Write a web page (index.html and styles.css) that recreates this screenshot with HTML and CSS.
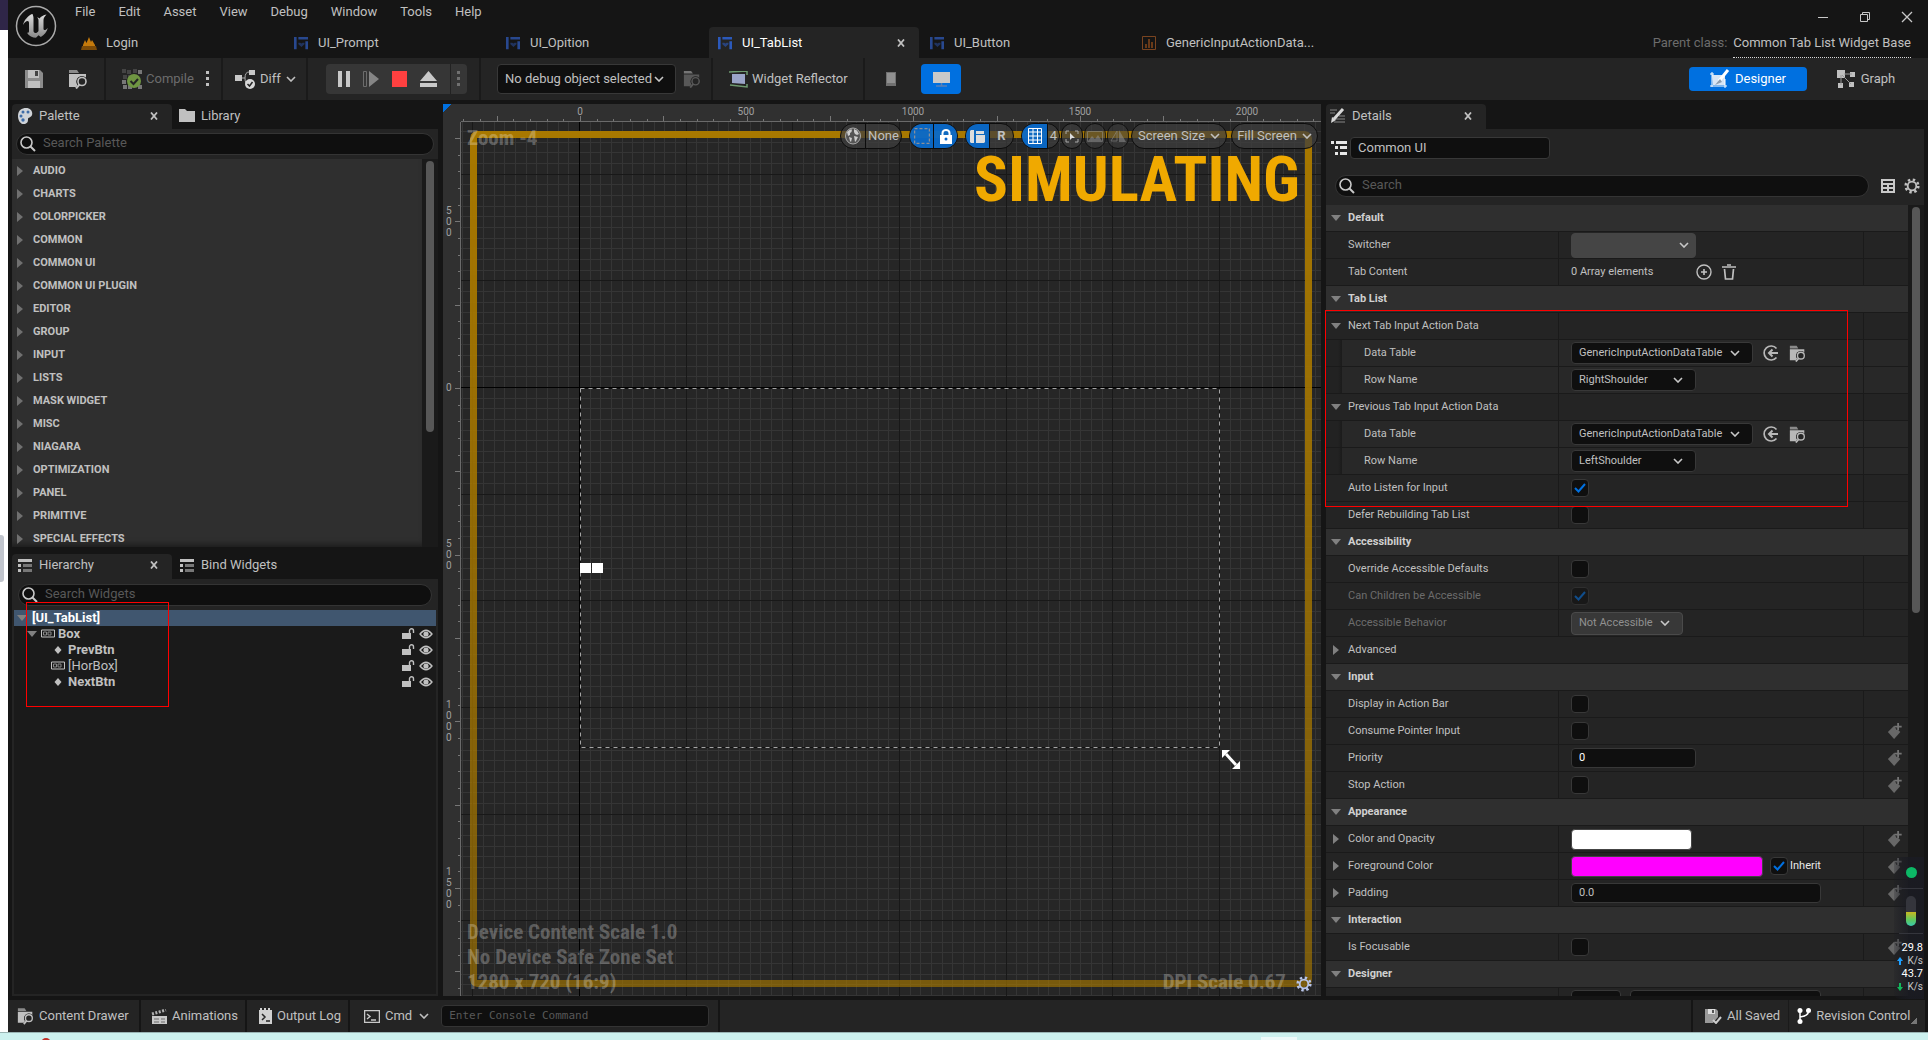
FILE: index.html
```html
<!DOCTYPE html>
<html lang="en">
<head>
<meta charset="utf-8">
<title>UI_TabList - Widget Designer</title>
<link rel="stylesheet" href="styles.css">
</head>
<body>
<svg class="defs" aria-hidden="true">
  <symbol id="browse" viewBox="0 0 20 20"><path fill="#8a8a8a" d="M1 1h8l2 3H1z"/><path fill="currentColor" d="M1 5h17v4.500a5 5 0 0 0-8.500 6.500L8 18H1z"/><circle cx="14" cy="12.500" r="5.500" fill="#242424"/><circle cx="14" cy="12.500" r="4" fill="none" stroke="currentColor" stroke-width="1.600"/><path d="M11.500 15.500L8 19.500" stroke="currentColor" stroke-width="2"/></symbol>
  <symbol id="widget" viewBox="0 0 16 16"><path fill="currentColor" d="M0 1h3v14H0zM5 1h11v3H5zM13 6h3v9h-3z"/><path fill="currentColor" opacity=".6" d="M8.500 12.500L5 9.300V7.600h2.200l1.300 1 1.300-1H12v1.700z"/></symbol>
  <symbol id="glass" viewBox="0 0 16 16"><circle cx="6.500" cy="6.500" r="5.500" fill="none" stroke="currentColor" stroke-width="1.600"/><path d="M10.500 10.500L15 15" stroke="currentColor" stroke-width="2"/></symbol>
  <symbol id="down" viewBox="0 0 10 6"><path d="M1 1l4 4 4-4" fill="none" stroke="currentColor" stroke-width="1.600"/></symbol>
  <symbol id="close" viewBox="0 0 8 8"><path d="M1 .5l6 7M7 .5l-6 7" stroke="currentColor" stroke-width="1.800"/></symbol>
  <symbol id="tree" viewBox="0 0 14 13"><path fill="currentColor" d="M0 0h14v3H0zM0 5h3v3H0zM0 10h3v3H0z"/><path fill="#777" d="M5 5h9v3H5zM5 10h9v3H5z"/></symbol>
  <symbol id="open" viewBox="0 0 10 8"><path fill="currentColor" d="M0 1h10L5 7z"/></symbol>
  <symbol id="shut" viewBox="0 0 8 10"><path fill="currentColor" d="M1 0l6 5-6 5z"/></symbol>
  <symbol id="unlock" viewBox="0 0 14 12"><path fill="currentColor" d="M1 5h9v6H1z"/><path d="M8.500 5V2.800a2 2 0 0 1 4 0V5" fill="none" stroke="currentColor" stroke-width="1.400"/></symbol>
  <symbol id="eye" viewBox="0 0 14 10"><path d="M1 5q6-7.500 12 0-6 7.500-12 0z" fill="none" stroke="currentColor" stroke-width="1.300"/><circle cx="7" cy="5" r="2.600" fill="currentColor"/></symbol>
  <symbol id="box" viewBox="0 0 14 8"><path d="M.5.5h13v7H.5z" fill="none" stroke="currentColor"/><path d="M2.500 2.500h3v3h-3zM7 2.500h3v3H7z" fill="none" stroke="#888"/></symbol>
  <symbol id="dia" viewBox="0 0 8 8"><path fill="currentColor" d="M4 0L7.500 4 4 8 .5 4z"/></symbol>
  <symbol id="key" viewBox="0 0 16 18"><path fill="#686868" d="M7 3l7 7-7 8-7-8z"/><path d="M11.500 0v8M8 4h7" stroke="#252525" stroke-width="4"/><path d="M11.500 0v8M7.500 4h8" stroke="#747474" stroke-width="2"/></symbol>
  <symbol id="use" viewBox="0 0 16 16"><path d="M13.500 3.500a7 7 0 1 0 0 9" fill="none" stroke="currentColor" stroke-width="1.700"/><path d="M15 8H6M9.500 4.500L6 8l3.500 3.500" fill="none" stroke="currentColor" stroke-width="2"/></symbol>
  <symbol id="gear" viewBox="0 0 16 16"><circle cx="8" cy="8" r="6.300" fill="none" stroke="currentColor" stroke-width="2.600" stroke-dasharray="2.400 2.550"/><circle cx="8" cy="8" r="4.300" fill="none" stroke="currentColor" stroke-width="1.800"/></symbol>
</svg>

<div class="desktop">
<div class="behind"><i class="behind-top"></i><i class="behind-thumb"></i></div>
<div class="app">

<header class="top">
  <svg class="logo" viewBox="0 0 42 42"><defs><linearGradient id="lg" x1="0" y1="0" x2="0" y2="1"><stop offset="0" stop-color="#ddd"/><stop offset="1" stop-color="#888"/></linearGradient></defs><circle cx="21" cy="21" r="19.500" fill="#111" stroke="#aaa" stroke-width="1.500"/><path fill="url(#lg)" d="M17 9c-4 2-8 6-9 11 2-3 3-4 4.500-4 1 0 1.500.8 1.500 2v8c0 1.500-.8 2-2 1.800 2 3.500 5.500 5 9 5l2.500-2.500 2.300 1.700c3.500-2 6-5 7-9-1.300 1.500-2.500 2.300-3.500 2-.8-.2-.8-1-.8-2V15c0-2 1.500-4 3-5.500-3 .5-5.500 2-7 4-.6-.8-1.500-1-2.500-1 1 .8 1.500 1.600 1.500 3v10.500c-1 1.500-2 2-3 2s-2-.8-2-2V13c0-1.500-.5-2.500-1-4z"/></svg>
  <div class="top-body">
    <div class="menubar">
      <nav class="menus"><button>File</button><button>Edit</button><button>Asset</button><button>View</button><button>Debug</button><button>Window</button><button>Tools</button><button>Help</button></nav>
      <div class="winbtns">
        <button aria-label="Minimize"><svg width="12" height="12" viewBox="0 0 12 12"><path d="M1 6.500h10" stroke="#c8c8c8"/></svg></button>
        <button aria-label="Restore"><svg width="12" height="12" viewBox="0 0 12 12"><path d="M1.500 3.500h7v7h-7zM3.500 3.500v-2h7v7h-2" fill="none" stroke="#c8c8c8"/></svg></button>
        <button aria-label="Close"><svg width="12" height="12" viewBox="0 0 12 12"><path d="M1 1l10 10M11 1L1 11" stroke="#c8c8c8" stroke-width="1.300"/></svg></button>
      </div>
    </div>
    <div class="docs">
      <button class="doc"><svg width="16" height="14" viewBox="0 0 16 14"><path fill="#c47a0c" d="M2 9l2-5 1.500 3L8 1l2 5 1-2 3 5v1H2z"/><path fill="#7c4b08" d="M1 10h14l1 4H0z"/></svg>Login</button>
      <button class="doc blue"><svg width="16" height="14"><use href="#widget"/></svg>UI_Prompt</button>
      <button class="doc blue"><svg width="16" height="14"><use href="#widget"/></svg>UI_Opition</button>
      <button class="doc blue active"><svg width="16" height="14"><use href="#widget"/></svg>UI_TabList<svg class="x" width="8" height="8"><use href="#close"/></svg></button>
      <button class="doc blue"><svg width="16" height="14"><use href="#widget"/></svg>UI_Button</button>
      <button class="doc"><svg width="16" height="14" viewBox="0 0 16 14"><path d="M1.500.5h13v13h-13z" fill="none" stroke="#7a4420"/><path stroke="#6a3a18" stroke-width="2" d="M5 12V8M8 12V3M11 12V6"/></svg>GenericInputActionData...</button>
      <p class="parent">Parent class: <a href="#">Common Tab List Widget Base</a></p>
    </div>
  </div>
</header>

<div class="toolbar">
  <div class="group g-file">
    <button aria-label="Save"><svg width="18" height="18" viewBox="0 0 18 18"><path fill="#8c8c8c" d="M0 0h15l3 3v15H0z"/><path fill="#c0c0c0" d="M3 0h11v8H3z"/><path fill="#444" d="M10 1h3v5h-3z"/><path fill="#c0c0c0" d="M3 11h12v7H3z"/></svg></button>
    <button aria-label="Browse"><svg width="20" height="20"><use href="#browse"/></svg></button>
  </div>
  <div class="group g-compile">
    <button class="off"><svg width="20" height="20" viewBox="0 0 20 20"><path fill="#444" d="M0 0h4v4H0zM5 1h4v4H5zM11 0h4v4h-4zM1 6h4v4H1zM6 6h4v4H6z"/><path fill="#777" d="M16 1h4v4h-4zM0 11h4v4H0zM1 16h4v4H1zM6 16h4v4H6zM16 16h4v4h-4z"/><circle cx="12" cy="12" r="7" fill="#6f9642"/><path d="M8.500 12l3 3 4.500-5" fill="none" stroke="#252525" stroke-width="2"/></svg>Compile</button>
    <button aria-label="Compile options"><svg width="4" height="16" viewBox="0 0 4 16"><path fill="#c0c0c0" d="M0 0h3v3H0zM0 6h3v3H0zM0 12h3v3H0z"/></svg></button>
  </div>
  <div class="group g-diff">
    <button><svg width="21" height="19" viewBox="0 0 21 19"><path fill="#c8c8c8" d="M0 5h7v6H0zM14 0h6v5h-6z"/><path d="M7 8h3M10 8q0-6 4-6M10 8q0 6 3 6" fill="none" stroke="#aaa"/><circle cx="15" cy="14" r="5" fill="#d8d8d8"/><path d="M12.500 14l2 2 3-4" fill="none" stroke="#252525" stroke-width="1.500"/></svg>Diff<svg width="10" height="6"><use href="#down"/></svg></button>
  </div>
  <div class="group g-play">
    <div class="play">
      <button aria-label="Pause"><svg width="12" height="16" viewBox="0 0 12 16"><path fill="#c8c8c8" d="M0 0h4v16H0zM8 0h4v16H8z"/></svg></button>
      <button aria-label="Step"><svg width="16" height="16" viewBox="0 0 16 16"><path fill="none" stroke="#6c6c6c" d="M.5.5h3v15h-3z"/><path fill="#858585" d="M6 0l10 8-10 8z"/></svg></button>
      <button aria-label="Stop"><svg width="15" height="16" viewBox="0 0 15 16"><path fill="#ff4040" d="M0 0h15v16H0z"/></svg></button>
      <button aria-label="Eject"><svg width="17" height="16" viewBox="0 0 17 16"><path fill="#c8c8c8" d="M8.500 0L17 10H0zM0 12h17v4H0z"/></svg></button>
      <button class="more" aria-label="Play options"><svg width="4" height="16" viewBox="0 0 4 16"><path fill="#707070" d="M0 0h3v3H0zM0 6h3v3H0zM0 12h3v3H0z"/></svg></button>
    </div>
  </div>
  <div class="group g-debug">
    <select class="dark debug" aria-label="Debug object"><option>No debug object selected</option></select>
    <button class="dim" aria-label="Browse debug object"><svg width="18" height="18"><use href="#browse"/></svg></button>
  </div>
  <div class="group g-reflect">
    <button><svg width="19" height="17" viewBox="0 0 19 17"><path fill="#9aa4c8" d="M3 3h13v10l-13-1z"/><path d="M0 1l18-1v4M1 14l17 2v-3" fill="none" stroke="#6e9a70" stroke-width="1.500"/></svg>Widget Reflector</button>
  </div>
  <div class="group g-view">
    <button aria-label="Mobile"><svg width="10" height="14" viewBox="0 0 10 14"><path fill="#707070" d="M0 0h10v14H0z"/><path fill="#909090" d="M1 1h8v10H1z"/></svg></button>
    <button class="desk" aria-label="Desktop"><svg width="17" height="15" viewBox="0 0 17 15"><path fill="#c9c9c9" d="M0 0h17v11H0z"/><path d="M8.500 11v3M3 14h11" stroke="#5a7fb5" stroke-width="1.500"/></svg></button>
  </div>
  <div class="modes">
    <button class="mode on"><svg width="20" height="20" viewBox="0 0 20 20"><path d="M2 6h13v10H3z" fill="#d8e6f5"/><path d="M0 5h4M2 3v15M0 17h17M15 10v9" stroke="#fff"/><path d="M18 1L9 12" stroke="#fff" stroke-width="3"/><path d="M10 10l-5 6 7-3z" fill="#8d9dae"/></svg>Designer</button>
    <button class="mode"><svg width="19" height="18" viewBox="0 0 19 18"><path fill="#c0c0c0" d="M0 0h8v8H0zM13 2h5v5h-5zM1 13h5v5H1zM12 12h5v5h-5z"/><path d="M4 5v10M7 4h8M5 5l9 9" stroke="#999"/></svg>Graph</button>
  </div>
</div>

<main class="work">
  <div class="side">
    <section class="panel">
      <div class="tabs">
        <button class="tab active"><svg width="16" height="16" viewBox="0 0 16 16"><path fill="#cfd3d8" d="M9 0c5 0 7 4 6 7s-4 2-4 4 0 4-3 5-7-2-7-8 4-8 8-8z"/><g fill="#3f6da8"><circle cx="6" cy="4" r="1.500"/><circle cx="11" cy="4" r="1.500"/><circle cx="4" cy="8" r="1.500"/><circle cx="6" cy="12" r="1.700"/></g></svg>Palette<svg class="x" width="8" height="8"><use href="#close"/></svg></button>
        <button class="tab"><svg width="16" height="13" viewBox="0 0 16 13"><path fill="#c0c0c0" d="M0 0h6l2 2h8v11H0z"/></svg>Library</button>
      </div>
      <div class="panel-body">
        <div class="search"><svg width="16" height="16"><use href="#glass"/></svg><input type="text" aria-label="Search Palette" placeholder="Search Palette"></div>
        <div class="scroller">
          <ul class="cats">
            <li><svg width="8" height="10"><use href="#shut"/></svg>AUDIO</li>
            <li><svg width="8" height="10"><use href="#shut"/></svg>CHARTS</li>
            <li><svg width="8" height="10"><use href="#shut"/></svg>COLORPICKER</li>
            <li><svg width="8" height="10"><use href="#shut"/></svg>COMMON</li>
            <li><svg width="8" height="10"><use href="#shut"/></svg>COMMON UI</li>
            <li><svg width="8" height="10"><use href="#shut"/></svg>COMMON UI PLUGIN</li>
            <li><svg width="8" height="10"><use href="#shut"/></svg>EDITOR</li>
            <li><svg width="8" height="10"><use href="#shut"/></svg>GROUP</li>
            <li><svg width="8" height="10"><use href="#shut"/></svg>INPUT</li>
            <li><svg width="8" height="10"><use href="#shut"/></svg>LISTS</li>
            <li><svg width="8" height="10"><use href="#shut"/></svg>MASK WIDGET</li>
            <li><svg width="8" height="10"><use href="#shut"/></svg>MISC</li>
            <li><svg width="8" height="10"><use href="#shut"/></svg>NIAGARA</li>
            <li><svg width="8" height="10"><use href="#shut"/></svg>OPTIMIZATION</li>
            <li><svg width="8" height="10"><use href="#shut"/></svg>PANEL</li>
            <li><svg width="8" height="10"><use href="#shut"/></svg>PRIMITIVE</li>
            <li><svg width="8" height="10"><use href="#shut"/></svg>SPECIAL EFFECTS</li>
          </ul>
          <div class="bar"><i class="thumb thumb-palette"></i></div>
        </div>
      </div>
    </section>
    <section class="panel">
      <div class="tabs">
        <button class="tab active"><svg width="16" height="13"><use href="#tree"/></svg>Hierarchy<svg class="x" width="8" height="8"><use href="#close"/></svg></button>
        <button class="tab"><svg width="16" height="13"><use href="#tree"/></svg>Bind Widgets</button>
      </div>
      <div class="panel-body hier">
        <div class="search"><svg width="16" height="16"><use href="#glass"/></svg><input type="text" aria-label="Search Widgets" placeholder="Search Widgets"></div>
        <ul class="treelist">
          <li class="sel"><svg class="arrow" width="10" height="8"><use href="#open"/></svg><b>[UI_TabList]</b></li>
          <li class="d1"><svg class="arrow" width="10" height="8"><use href="#open"/></svg><svg width="14" height="9"><use href="#box"/></svg><b>Box</b><span class="acts"><svg width="14" height="12"><use href="#unlock"/></svg><svg width="14" height="10"><use href="#eye"/></svg></span></li>
          <li class="d2"><svg width="14" height="8"><use href="#dia"/></svg><b>PrevBtn</b><span class="acts"><svg width="14" height="12"><use href="#unlock"/></svg><svg width="14" height="10"><use href="#eye"/></svg></span></li>
          <li class="d2"><svg width="14" height="9"><use href="#box"/></svg><span>[HorBox]</span><span class="acts"><svg width="14" height="12"><use href="#unlock"/></svg><svg width="14" height="10"><use href="#eye"/></svg></span></li>
          <li class="d2"><svg width="14" height="8"><use href="#dia"/></svg><b>NextBtn</b><span class="acts"><svg width="14" height="12"><use href="#unlock"/></svg><svg width="14" height="10"><use href="#eye"/></svg></span></li>
        </ul>
        <i class="mark mark-tree"></i>
      </div>
    </section>
  </div>

  <section class="viewport">
    <div class="corner"></div>
    <div class="ruler-x"><span style="left:119px">0</span><span style="left:285px">500</span><span style="left:452px">1000</span><span style="left:619px">1500</span><span style="left:786px">2000</span></div>
    <div class="ruler-y"><span style="top:99px">5<br>0<br>0</span><span style="top:265px">0</span><span style="top:432px">5<br>0<br>0</span><span style="top:599px">1<br>0<br>0<br>0</span><span style="top:766px">1<br>5<br>0<br>0</span></div>
    <div class="canvas">
      <i class="axis-x"></i><i class="axis-y"></i>
      <i class="sim-border"></i>
      <svg class="bounds" width="640" height="360"><rect x=".5" y=".5" width="639" height="359" fill="none" stroke="#111"/><rect x=".5" y=".5" width="639" height="359" fill="none" stroke="#a4a4a4" stroke-dasharray="4 4"/></svg>
      <i class="handle"></i><i class="handle second"></i>
      <svg class="resize" width="18" height="19" viewBox="0 0 18 19"><path d="M4 4l10 11" stroke="#fff" stroke-width="3"/><path fill="#fff" d="M0 0h8L0 8zM18 19h-8l8-8z"/></svg>
      <p class="hint zoom">Zoom -4</p>
      <p class="hint info">Device Content Scale 1.0<br>No Device Safe Zone Set<br>1280 x 720 (16:9)</p>
      <p class="hint dpi">DPI Scale 0.67</p>
      <svg class="dpi-gear" width="16" height="16"><use href="#gear"/></svg>
      <p class="sim">SIMULATING</p>
      <div class="pills">
        <div class="pill p-none"><button aria-label="Localization"><svg width="16" height="18" viewBox="0 0 16 18"><ellipse cx="8" cy="9" rx="7.500" ry="8" fill="#555" stroke="#aaa"/><path fill="#ccc" d="M2 5l3-2.500h2L6.500 5 5 6v2L3 9zM4 10l3 1-1 4-1-1zM9 2l3 1.500L14 7l-2 1-2-1-1-2zM9 9l4 1-2 4-1 1z"/></svg></button><button>None</button></div>
        <div class="pill p-two"><button class="on" aria-label="Outline"><svg width="16" height="16" viewBox="0 0 16 16"><path d="M.5.5h15v15H.5z" fill="none" stroke="#8a8f98" stroke-width="1.500" stroke-dasharray="3 2"/></svg></button><button class="on" aria-label="Respect locks"><svg width="12" height="15" viewBox="0 0 12 15"><path fill="#fff" d="M0 6h12v9H0z"/><path d="M2.500 6V4a3.500 3 0 0 1 7 0v2" fill="none" stroke="#fff" stroke-width="2"/><circle cx="6" cy="10" r="1.500" fill="#0a66c8"/></svg></button></div>
        <div class="pill p-two"><button class="on" aria-label="Flow"><svg width="15" height="13" viewBox="0 0 15 13"><path fill="#ddd" d="M0 1l1-1h3v13H1l-1-1zM6 1h8v3H6zM6 5h9v7l-1 1H6z"/></svg></button><button><b>R</b></button></div>
        <div class="pill p-grid"><button class="on" aria-label="Grid snap"><svg width="14" height="16" viewBox="0 0 14 16"><path d="M.5.5h13v15H.5zM5 0v16M9.500 0v16M0 4h14M0 8h14M0 12h14" fill="none" stroke="#fff"/></svg></button><button>4</button></div>
        <div class="pill round"><button aria-label="Zoom to fit"><svg width="14" height="13" viewBox="0 0 14 13"><path d="M1 4V1h3M10 1h3v3M13 9v3h-3M4 12H1V9" fill="none" stroke="#aaa"/><path fill="#ddd" d="M5 3l5 5H7l-2 2z"/></svg></button></div>
        <div class="pill round off"><button aria-label="Preview background"><svg width="16" height="11" viewBox="0 0 16 11"><path d="M.5.5h15v10H.5z" fill="none" stroke="#777"/><path fill="#777" d="M1 10l4-5 3 3 3-4 4 6z"/></svg></button></div>
        <div class="pill round off"><button aria-label="Flip"><svg width="16" height="12" viewBox="0 0 16 12"><path fill="none" stroke="#777" d="M7 1v10H1z"/><path fill="#777" d="M9 0v12h7z"/></svg></button></div>
        <div class="pill wide"><button>Screen Size<svg width="10" height="6"><use href="#down"/></svg></button></div>
        <div class="pill fill"><button>Fill Screen<svg width="10" height="6"><use href="#down"/></svg></button></div>
      </div>
    </div>
  </section>

  <section class="panel details">
    <div class="tabs"><button class="tab active"><svg width="16" height="16" viewBox="0 0 16 16"><path d="M0 2h7M0 5h5M9 8h6M6 11h9M4 14h11" stroke="#666" stroke-width="1.500"/><path d="M13 1L4 11" stroke="#d8d8d8" stroke-width="3"/><path fill="#d8d8d8" d="M2 9l4 3-5 3z"/></svg>Details<svg class="x" width="8" height="8"><use href="#close"/></svg></button></div>
    <div class="panel-body">
      <div class="namebar"><svg width="16" height="14" viewBox="0 0 16 14"><path fill="#e8e8e8" d="M0 0h3v3H0zM5 0h11v3H5zM4 5h3v3H4zM9 5h7v3H9zM4 11h3v3H4zM9 11h7v3H9z"/></svg><input class="field" type="text" aria-label="Widget name" value="Common UI"></div>
      <div class="searchbar"><div class="search"><svg width="16" height="16"><use href="#glass"/></svg><input type="text" aria-label="Search details" placeholder="Search"></div>
        <button aria-label="Property matrix"><svg width="14" height="14" viewBox="0 0 14 14"><path fill="#c8c8c8" fill-rule="evenodd" d="M0 0h14v14H0zM2 2v2h10V2zM2 6v2h4V6zM8 6v2h4V6zM2 10v2h4v-2zM8 10v2h4v-2z"/></svg></button><button aria-label="Settings"><svg width="16" height="16"><use href="#gear"/></svg></button></div>
      <div class="props">
        <div class="rows">
          <div class="row head"><svg width="10" height="8"><use href="#open"/></svg>Default</div>
          <div class="row"><label class="name" for="sw">Switcher</label><div class="val"><select id="sw" class="gray"><option></option></select></div><div class="end"></div></div>
          <div class="row"><div class="name">Tab Content</div><div class="val"><span class="count">0 Array elements</span><button aria-label="Add element"><svg width="16" height="16" viewBox="0 0 16 16"><circle cx="8" cy="8" r="7" fill="none" stroke="#c0c0c0" stroke-width="1.400"/><path d="M8 5v6M5 8h6" stroke="#c0c0c0" stroke-width="1.600"/></svg></button><button aria-label="Remove all"><svg width="14" height="16" viewBox="0 0 14 16"><path d="M0 3h14M5 1h4M2.500 5l1 10h7l1-10" fill="none" stroke="#c0c0c0" stroke-width="1.700"/></svg></button></div><div class="end"></div></div>
          <div class="row head"><svg width="10" height="8"><use href="#open"/></svg>Tab List</div>
          <div class="row"><div class="name has"><svg width="10" height="8"><use href="#open"/></svg>Next Tab Input Action Data</div><div class="val"></div><div class="end"></div></div>
          <div class="row sub"><label class="name" for="dt1">Data Table</label><div class="val"><select id="dt1" class="dark table"><option>GenericInputActionDataTable</option></select><button aria-label="Use selected"><svg width="16" height="16"><use href="#use"/></svg></button><button aria-label="Browse to asset"><svg width="17" height="17"><use href="#browse"/></svg></button></div><div class="end"></div></div>
          <div class="row sub"><label class="name" for="rn1">Row Name</label><div class="val"><select id="rn1" class="dark name-sel"><option>RightShoulder</option></select></div><div class="end"></div></div>
          <div class="row"><div class="name has"><svg width="10" height="8"><use href="#open"/></svg>Previous Tab Input Action Data</div><div class="val"></div><div class="end"></div></div>
          <div class="row sub"><label class="name" for="dt2">Data Table</label><div class="val"><select id="dt2" class="dark table"><option>GenericInputActionDataTable</option></select><button aria-label="Use selected"><svg width="16" height="16"><use href="#use"/></svg></button><button aria-label="Browse to asset"><svg width="17" height="17"><use href="#browse"/></svg></button></div><div class="end"></div></div>
          <div class="row sub"><label class="name" for="rn2">Row Name</label><div class="val"><select id="rn2" class="dark name-sel"><option>LeftShoulder</option></select></div><div class="end"></div></div>
          <div class="row"><label class="name" for="c1">Auto Listen for Input</label><div class="val"><input id="c1" type="checkbox" checked></div><div class="end"></div></div>
          <div class="row"><label class="name" for="c2">Defer Rebuilding Tab List</label><div class="val"><input id="c2" type="checkbox"></div><div class="end"></div></div>
          <div class="row head"><svg width="10" height="8"><use href="#open"/></svg>Accessibility</div>
          <div class="row"><label class="name" for="c3">Override Accessible Defaults</label><div class="val"><input id="c3" type="checkbox"></div><div class="end"></div></div>
          <div class="row"><label class="name muted" for="c4">Can Children be Accessible</label><div class="val"><input id="c4" type="checkbox" checked disabled></div><div class="end"></div></div>
          <div class="row"><label class="name muted" for="ab">Accessible Behavior</label><div class="val"><select id="ab" class="gray access" disabled><option>Not Accessible</option></select></div><div class="end"></div></div>
          <div class="row"><div class="name has adv"><svg width="10" height="10"><use href="#shut"/></svg>Advanced</div></div>
          <div class="row head"><svg width="10" height="8"><use href="#open"/></svg>Input</div>
          <div class="row"><label class="name" for="c5">Display in Action Bar</label><div class="val"><input id="c5" type="checkbox"></div><div class="end"></div></div>
          <div class="row"><label class="name" for="c6">Consume Pointer Input</label><div class="val"><input id="c6" type="checkbox"></div><div class="end"><svg width="16" height="16"><use href="#key"/></svg></div></div>
          <div class="row"><label class="name" for="pr">Priority</label><div class="val"><input id="pr" class="field num" type="text" value="0"></div><div class="end"><svg width="16" height="16"><use href="#key"/></svg></div></div>
          <div class="row"><label class="name" for="c7">Stop Action</label><div class="val"><input id="c7" type="checkbox"></div><div class="end"><svg width="16" height="16"><use href="#key"/></svg></div></div>
          <div class="row head"><svg width="10" height="8"><use href="#open"/></svg>Appearance</div>
          <div class="row"><div class="name has"><svg width="10" height="10"><use href="#shut"/></svg>Color and Opacity</div><div class="val"><button class="swatch white" aria-label="Color and Opacity"></button></div><div class="end"><svg width="16" height="16"><use href="#key"/></svg></div></div>
          <div class="row"><div class="name has"><svg width="10" height="10"><use href="#shut"/></svg>Foreground Color</div><div class="val"><button class="swatch pink" aria-label="Foreground Color"></button><input id="c8" type="checkbox" checked><label class="inherit" for="c8">Inherit</label></div><div class="end"><svg width="16" height="16"><use href="#key"/></svg></div></div>
          <div class="row"><label class="name has" for="pd"><svg width="10" height="10"><use href="#shut"/></svg>Padding</label><div class="val"><input id="pd" class="field pad" type="text" value="0.0"></div><div class="end"><svg width="16" height="16"><use href="#key"/></svg></div></div>
          <div class="row head"><svg width="10" height="8"><use href="#open"/></svg>Interaction</div>
          <div class="row"><label class="name" for="c9">Is Focusable</label><div class="val"><input id="c9" type="checkbox"></div><div class="end"><svg width="16" height="16"><use href="#key"/></svg></div></div>
          <div class="row head"><svg width="10" height="8"><use href="#open"/></svg>Designer</div>
          <div class="row"><div class="name"></div><div class="val"><input class="field f-a" type="text" aria-label="Designer size"><input class="field f-b" type="text" aria-label="Designer value"></div><div class="end"></div></div>
        </div>
        <div class="bar"><i class="thumb thumb-props"></i></div>
      </div>
      <i class="mark mark-props"></i>
    </div>
    <aside class="meter">
      <i class="dot"></i><i class="rule"></i><i class="level"></i><i class="rule"></i>
      <p>29.8</p><p class="rate"><svg width="6" height="8" viewBox="0 0 6 8"><path fill="#1e9fff" d="M3 0l3 4H4v4H2V4H0z"/></svg>K/s</p>
      <p>43.7</p><p class="rate"><svg width="6" height="8" viewBox="0 0 6 8"><path fill="#12b85c" d="M3 8l3-4H4V0H2v4H0z"/></svg>K/s</p>
    </aside>
  </section>
</main>

<footer class="status">
  <button class="st s1"><svg width="17" height="20"><use href="#browse"/></svg>Content Drawer</button>
  <button class="st s2"><svg width="16" height="15" viewBox="0 0 16 15"><path fill="#c8c8c8" d="M1 7h15v8H1z"/><path fill="#999" d="M3 9h5v2H3zM10 9h4v2h-4zM3 12h5v2H3zM10 12h4v2h-4z"/><path d="M1 5l14-4" stroke="#b0b0b0" stroke-width="3" stroke-dasharray="2 1.500"/></svg>Animations</button>
  <button class="st s3"><svg width="13" height="16" viewBox="0 0 13 16"><path fill="#d0d0d0" d="M0 2h1V0h2v2h2V0h2v2h2V0h2v2h2v14H0z"/><path d="M3 6l3 3-3 3M7 13h4" fill="none" stroke="#252525" stroke-width="1.500"/></svg>Output Log</button>
  <div class="cmd"><button class="st"><svg width="16" height="13" viewBox="0 0 16 13"><path d="M.5.5h15v12H.5z" fill="none" stroke="#c8c8c8" stroke-width="1.500"/><path d="M3 4l3 2.500L3 9M7 10h5" fill="none" stroke="#c8c8c8" stroke-width="1.400"/></svg>Cmd<svg width="10" height="6"><use href="#down"/></svg></button><input class="console" type="text" aria-label="Console command" placeholder="Enter Console Command"></div>
  <div class="right">
    <button class="st"><svg width="17" height="15" viewBox="0 0 17 15"><path fill="#999" d="M0 0h11l2 2v6l-5 6H0z"/><path fill="#ddd" d="M3 0h7v5H3z"/><path fill="#555" d="M7 1h2v3H7z"/><path d="M8 11l3 3 5-6" fill="none" stroke="#ccc" stroke-width="2"/></svg>All Saved</button>
    <button class="st rev"><svg width="14" height="16" viewBox="0 0 14 16"><circle cx="3" cy="2.500" r="2.500" fill="#fff"/><circle cx="3" cy="13.500" r="2.500" fill="#fff"/><circle cx="11.500" cy="2.500" r="2.500" fill="#fff"/><path d="M3 2v12M11.500 3q0 5-8.500 6" fill="none" stroke="#fff" stroke-width="1.500"/></svg>Revision Control<i class="grip"></i></button>
  </div>
</footer>
</div>
<div class="taskbar"><i class="blob"></i><i class="pale"></i></div>
</div>
</body>
</html>
```
FILE: styles.css
```css
* { box-sizing: border-box; }
body { margin: 0; background: #fff; font: 13px/16px Roboto, "Noto Sans", sans-serif; color: #c0c0c0; }
p, ul { margin: 0; padding: 0; list-style: none; }
i { display: block; font-style: normal; }
svg { flex: none; display: block; }
button, input, select { font: inherit; color: inherit; margin: 0; }
button { background: none; border: 0; padding: 0; display: flex; align-items: center; white-space: nowrap; }
.defs { position: absolute; width: 0; height: 0; }

.desktop { height: 100vh; display: grid; grid-template: minmax(0, 1fr) 8px / 8px minmax(0, 1fr); overflow: hidden; }
.behind { background: #fff; display: flex; flex-direction: column; }
.behind-top { height: 30px; background: #2f2648; }
.behind-thumb { margin-top: 505px; height: 47px; width: 4px; background: #c0c4cc; border-radius: 0 3px 3px 0; }
.taskbar { grid-column: 1 / 3; background: #cdf1ef; border-top: 1px solid #9ab4b4; display: flex; }
.blob { width: 10px; height: 6px; margin: 5px 0 0 41px; border-radius: 5px 5px 0 0; background: #c03028; }
.pale { width: 36px; height: 3px; margin: 4px 0 0 1210px; background: #eefafa; }
.app { background: #151515; display: flex; flex-direction: column; min-height: 0; }

/* Title bar */
.top { display: flex; height: 58px; flex: none; }
.logo { width: 42px; height: 42px; margin: 5px 0 0 7px; }
.top-body { flex: 1; min-width: 0; display: flex; flex-direction: column; justify-content: space-between; padding-left: 18px; }
.menubar { display: flex; justify-content: space-between; height: 27px; }
.menus { display: flex; gap: 23px; padding-bottom: 4px; }
.winbtns { display: flex; gap: 30px; padding: 7px 15px 0 0; }
.docs { display: flex; height: 31px; padding-right: 17px; margin-left: -2px; }
.doc { flex: 0 0 210px; margin-right: 2px; padding: 0 14px 0 8px; gap: 9px; border-radius: 4px 4px 0 0; }
.blue > svg:first-child { color: #28488f; }
.doc.active { background: #242424; color: #fff; }
.doc.active > svg:first-child { color: #2b59bb; }
.x { margin-left: auto; color: #c0c0c0; }
.parent { margin: 8px 0 0 auto; color: #6c6c6c; display: flex; gap: 6px; white-space: nowrap; }
.parent a { color: #c0c0c0; text-decoration: none; border-bottom: 1px dotted #d8d8d8; }

/* Toolbar */
.toolbar { flex: none; height: 42px; background: #242424; display: flex; margin-bottom: 4px; }
.group { display: flex; align-items: center; border-right: 2px solid #1a1a1a; }
.g-file { width: 98px; padding-left: 17px; gap: 25px; }
.g-compile { width: 117px; padding-left: 16px; justify-content: space-between; padding-right: 11px; }
.g-compile button, .g-diff button, .g-reflect button { gap: 4px; }
.off { color: #6c6c6c; }
.g-diff { width: 85px; padding-left: 12px; }
.g-diff button svg:last-child { margin-left: 1px; }
.g-play { width: 173px; padding-left: 18px; }
.play { display: flex; width: 141px; height: 30px; border-radius: 4px; background: #363636; padding-left: 12px; gap: 13px; }
.more { width: 23px; border-left: 1px solid #222; justify-content: center; margin-left: auto; }
.g-debug { width: 232px; padding-left: 16px; gap: 7px; }
.dim { color: #666; opacity: .8; }
.g-reflect { width: 152px; padding-left: 16px; }
.g-view { border: 0; padding-left: 21px; gap: 25px; }
.desk { width: 40px; height: 30px; border-radius: 4px; background: #0070e0; justify-content: center; }
.modes { margin-left: auto; display: flex; align-items: center; padding-right: 3px; }
.mode { width: 118px; height: 24px; border-radius: 4px; justify-content: center; gap: 5px; }
.on.mode { background: #0070e0; color: #fff; }

select { appearance: none; border-radius: 4px; padding: 0 22px 0 7px; border: 1px solid #383838; background: #0f0f0f url("data:image/svg+xml,%3Csvg xmlns='http://www.w3.org/2000/svg' width='10' height='6'%3E%3Cpath d='M1 1l4 4 4-4' fill='none' stroke='%23c8c8c8' stroke-width='1.600'/%3E%3C/svg%3E") no-repeat right 12px center; height: 22px; }
select.debug { width: 179px; height: 30px; background-position: right 11px center; }
select.gray { width: 125px; height: 25px; background-color: #454545; border-color: #454545; background-position: right 6px center; }
select.table { width: 182px; }
select.name-sel { width: 125px; }
select.access { width: 112px; height: 23px; background-color: #383838; border-color: #4a4a4a; color: #909090; opacity: 1; background-position: right 12px center; }

/* Work area */
.work { flex: 1; min-height: 0; display: grid; grid-template: minmax(0, 1fr) / 426px minmax(0, 1fr) 598px; gap: 5px; padding: 0 4px; }
.side { display: grid; grid-template-rows: minmax(0, 1fr) minmax(0, 1fr); gap: 7px; }
.panel { display: flex; flex-direction: column; min-height: 0; }
.tabs { display: flex; flex: none; height: 25px; }
.tab { width: 160px; padding: 0 14px 2px 5px; gap: 6px; border-radius: 4px 4px 0 0; }
.tab + .tab { padding-left: 7px; }
.tab.active { background: #242424; }
.panel-body { flex: 1; min-height: 0; background: #242424; display: flex; flex-direction: column; position: relative; }
.search { display: flex; align-items: center; gap: 7px; height: 22px; flex: none; margin: 4px; padding: 0 6px 0 3px; background: #0f0f0f; border: 1px solid #343434; border-radius: 11px; color: #c8c8c8; }
.search input { flex: 1; min-width: 0; background: none; border: 0; outline: 0; padding: 0 0 2px; }
::placeholder { color: #585858; opacity: 1; }
.scroller, .props { flex: 1; min-height: 0; display: flex; overflow: hidden; }
.cats { flex: 1; background: #2f2f2f; font-weight: 700; font-size: 11px; overflow: hidden; box-shadow: inset 0 -6px 6px -4px #1a1a1a; }
.cats li { height: 23px; display: flex; align-items: center; gap: 9px; padding-left: 4px; }
.cats svg { color: #707070; }
.bar { width: 16px; background: #1a1a1a; padding: 2px 4px; }
.thumb { width: 8px; border-radius: 4px; background: #575757; }
.thumb-palette { height: 271px; }
.thumb-props { height: 406px; }
.hier { padding: 1px 2px 2px; }
.treelist { flex: 1; background: #1a1a1a; }
.treelist li { height: 16px; display: flex; align-items: center; gap: 3px; padding: 0 3px; }
.arrow { color: #808080; margin-right: 1px; }
.sel { background: #40566f; color: #fff; }
.treelist .sel { gap: 4px; }
.treelist .d1 { padding-left: 13px; }
.treelist .d2 { padding-left: 37px; }
.acts { margin-left: auto; display: flex; align-items: center; gap: 4px; }
.mark { position: absolute; border: 1px solid #f00; pointer-events: none; }
.mark-tree { left: 14px; top: 23px; width: 143px; height: 105px; }
.mark-props { left: -1px; top: 181px; width: 523px; height: 197px; }

/* Designer viewport */
.viewport { display: grid; grid-template: 18px minmax(0, 1fr) / 18px minmax(0, 1fr); background: #303030; overflow: hidden; }
.corner { background: linear-gradient(135deg, #0070e0 6px, transparent 6px); }
.ruler-x, .ruler-y { position: relative; font-size: 10px; line-height: 11px; color: #a0a0a0; }
.ruler-x { border-bottom: 1px solid #6a6a6a; }
.ruler-y { border-right: 1px solid #6a6a6a; }
.ruler-x span { position: absolute; top: 2px; transform: translateX(-50%); }
.ruler-y span { position: absolute; left: 3px; transform: translateY(-50%); }
.ruler-x::after { content: ""; position: absolute; inset: auto 0 0 0; height: 5px;
  background: linear-gradient(to right, #777 0 1px, transparent 1px 83px, #777 83px 84px, transparent 84px 167px, #777 167px 168px, transparent 168px) 119px 0 / 250px 5px repeat-x,
  linear-gradient(to right, #777 0 1px, transparent 1px 17px, #777 17px 18px, transparent 18px 33px, #777 33px 34px, transparent 34px) 19px 3px / 50px 2px repeat-x; }
.ruler-y::after { content: ""; position: absolute; inset: 0 0 0 auto; width: 5px;
  background: linear-gradient(to bottom, #777 0 1px, transparent 1px 83px, #777 83px 84px, transparent 84px 167px, #777 167px 168px, transparent 168px) 0 266px / 5px 250px repeat-y,
  linear-gradient(to bottom, #777 0 1px, transparent 1px 17px, #777 17px 18px, transparent 18px 33px, #777 33px 34px, transparent 34px) 3px 16px / 2px 50px repeat-y; }
.canvas { position: relative; overflow: hidden; background-color: #262626;
  background-image:
    linear-gradient(to right, #181818 0 1px, transparent 1px 107px, #181818 107px 108px, transparent 108px 213px, #181818 213px 214px, transparent 214px),
    linear-gradient(to bottom, #181818 0 1px, transparent 1px 107px, #181818 107px 108px, transparent 108px 213px, #181818 213px 214px, transparent 214px),
    linear-gradient(to right, #353535 0 1px, transparent 1px 11px, #353535 11px 12px, transparent 12px 21px, #353535 21px 22px, transparent 22px),
    linear-gradient(to bottom, #353535 0 1px, transparent 1px 11px, #353535 11px 12px, transparent 12px 21px, #353535 21px 22px, transparent 22px);
  background-size: 320px 320px, 320px 320px, 32px 32px, 32px 32px;
  background-position: 118px 265px; }
.axis-x { position: absolute; left: 0; right: 0; top: 265px; height: 1px; background: #000; }
.axis-y { position: absolute; top: 0; bottom: 0; left: 118px; width: 1px; background: #000; }
.sim-border { position: absolute; inset: 9px; border: 7px solid #a87800; border-radius: 7px; -webkit-mask-image: linear-gradient(#000, rgba(0, 0, 0, .64)); mask-image: linear-gradient(#000, rgba(0, 0, 0, .64)); }
.bounds { position: absolute; left: 119px; top: 266px; }
.handle { position: absolute; left: 119px; top: 441px; width: 11px; height: 10px; background: #fff; }
.handle.second { left: 131px; }
.resize { position: absolute; left: 761px; top: 628px; }
.hint { position: absolute; font: 700 21px/25px "Roboto Condensed", "Liberation Sans Narrow", Roboto, sans-serif; color: rgba(255, 255, 255, .27); white-space: nowrap; }
.zoom { left: 6px; top: 4px; }
.info { left: 6px; bottom: 1px; }
.dpi { right: 35px; bottom: 1px; }
.dpi-gear { position: absolute; right: 9px; bottom: 4px; color: #b8c4e8; }
.sim { position: absolute; right: 21px; top: 20px; font: 700 63px/75px "Roboto Condensed", "Liberation Sans Narrow", Roboto, sans-serif; color: #f0a900; }
.pills { position: absolute; right: 3px; top: 1px; display: flex; }
.pill { display: flex; height: 26px; border: 1px solid #0c0c0c; border-radius: 13px; background: rgba(62, 62, 62, .72); overflow: hidden; }
.pill button { flex: 1; justify-content: center; gap: 5px; }
.pill button + button { border-left: 1px solid #0c0c0c; }
.pill .on { background: rgba(0, 112, 224, .82); }
.p-none { width: 62px; margin-right: 7px; }
.p-none button:first-child { flex: 0 0 24px; }
.p-two { width: 49px; margin-right: 7px; }
.p-grid { width: 39px; }
.p-grid button:first-child { flex: 0 0 25px; }
.round { width: 22px; margin-left: 1px; }
.round.off { opacity: .8; }
.wide { width: 96px; margin-left: 2px; }
.fill { width: 87px; margin-left: 4px; }

/* Details */
.details { position: relative; }
.details .tab { padding-left: 4px; }
.namebar { display: flex; align-items: center; gap: 3px; padding: 8px 6px 0 5px; }
.field { height: 22px; background: #0f0f0f; border: 1px solid #383838; border-radius: 4px; padding: 0 7px 2px; outline: 0; }
.namebar .field { width: 200px; }
.searchbar { display: flex; align-items: center; padding: 12px 4px 4px 5px; }
.searchbar .search { flex: 1; margin-right: 12px; }
.searchbar button + button { margin-left: 9px; }
.rows { flex: 1; min-width: 0; font-size: 11px; }
.row { height: 27px; display: grid; grid-template-columns: 232px minmax(0, 1fr) 45px; border-bottom: 1px solid #1a1a1a; background: #242424; }
.row.head { display: flex; align-items: center; gap: 7px; padding-left: 5px; background: #2f2f2f; font-weight: 700; color: #d0d0d0; }
.row svg { color: #808080; }
.name { display: flex; align-items: center; padding-left: 22px; }
.name.has { padding-left: 5px; gap: 7px; }
.muted { color: #6c6c6c; }
.val { display: flex; align-items: center; border-left: 1px solid #1a1a1a; padding-left: 12px; min-width: 0; }
.val button { margin-left: 10px; }
.val button svg { color: #b8b8b8; }
.val .count { width: 115px; }
.val .swatch { margin: 0; height: 21px; border-radius: 4px; border: 1px solid #444; }
.val .white { width: 121px; background: #fff; }
.val .pink { width: 192px; background: #f0f; }
.end { border-left: 1px solid #1a1a1a; display: flex; align-items: center; padding-left: 23px; }
.sub .name { margin-left: 16px; }
.row.sub { background: linear-gradient(to right, #222 0 12px, #1b1b1b 16px, #282828 16px); }
.num { width: 125px; height: 20px; color: #fff; }
.pad { width: 250px; height: 20px; }
.f-a { width: 50px; margin-right: 9px; }
.f-b { width: 191px; }
input[type="checkbox"] { appearance: none; width: 18px; height: 18px; border: 1px solid #383838; border-radius: 4px; background: #0f0f0f; }
input[type="checkbox"]:checked { background: #0f0f0f url("data:image/svg+xml,%3Csvg xmlns='http://www.w3.org/2000/svg' width='12' height='10'%3E%3Cpath d='M1 5l3.500 3.500L11 1' fill='none' stroke='%230070e0' stroke-width='2'/%3E%3C/svg%3E") no-repeat center; }
input[type="checkbox"]:disabled { opacity: .55; }
.swatch + input { margin-left: 7px; }
.inherit { margin-left: 2px; color: #e8e8e8; }
.meter { position: absolute; right: 0; top: 753px; width: 30px; height: 142px; border-radius: 6px 0 0 6px; background: linear-gradient(to right, rgba(26, 27, 34, .2), rgba(26, 27, 34, .9) 16px); font-size: 11px; color: #fff; padding: 0 1px 0 5px; display: flex; flex-direction: column; align-items: center; }
.meter p { align-self: flex-end; white-space: nowrap; height: 13px; line-height: 13px; }
.dot { width: 11px; height: 11px; border-radius: 6px; background: #0cb866; margin: 10px 0; flex: none; }
.rule { align-self: stretch; height: 1px; background: #34353c; }
.level { width: 10px; height: 30px; margin: 7px 0; flex: none; border-radius: 5px; background: linear-gradient(#34353c 0 16px, #c8b820 16px, #5cc860 24px, #38c8b0); }
.rule + p { margin-top: 7px; }
.meter .rate { color: #c8c8c8; font-size: 10px; display: flex; align-items: center; gap: 4px; }

/* Status bar */
.status { flex: none; height: 32px; margin: 4px 3px 0 0; background: #242424; display: flex; }
.st { gap: 5px; border-right: 2px solid #151515; }
.s1 { width: 133px; padding-left: 9px; }
.s2 { width: 106px; padding-left: 10px; }
.s3 { width: 103px; padding-left: 12px; }
.cmd { display: flex; align-items: center; gap: 12px; width: 370px; padding-left: 14px; border-right: 2px solid #151515; }
.cmd .st { border: 0; }
.cmd .st svg:last-child { margin-left: 2px; }
.console { width: 268px; height: 22px; background: #0f0f0f; border: 1px solid #343434; border-radius: 4px; padding: 0 7px 2px; outline: 0; font: 11px/16px "DejaVu Sans Mono", monospace; }
.right { margin-left: auto; width: 234px; border-left: 2px solid #151515; display: flex; padding-left: 12px; }
.right .st { border-right: 0; }
.right .rev { margin-left: 9px; padding-left: 8px; box-shadow: -1px 0 #1a1a1a; }
.grip { width: 6px; height: 6px; align-self: flex-end; margin: 0 0 8px -4px; background: linear-gradient(135deg, transparent 50%, #777 50%); }
```
